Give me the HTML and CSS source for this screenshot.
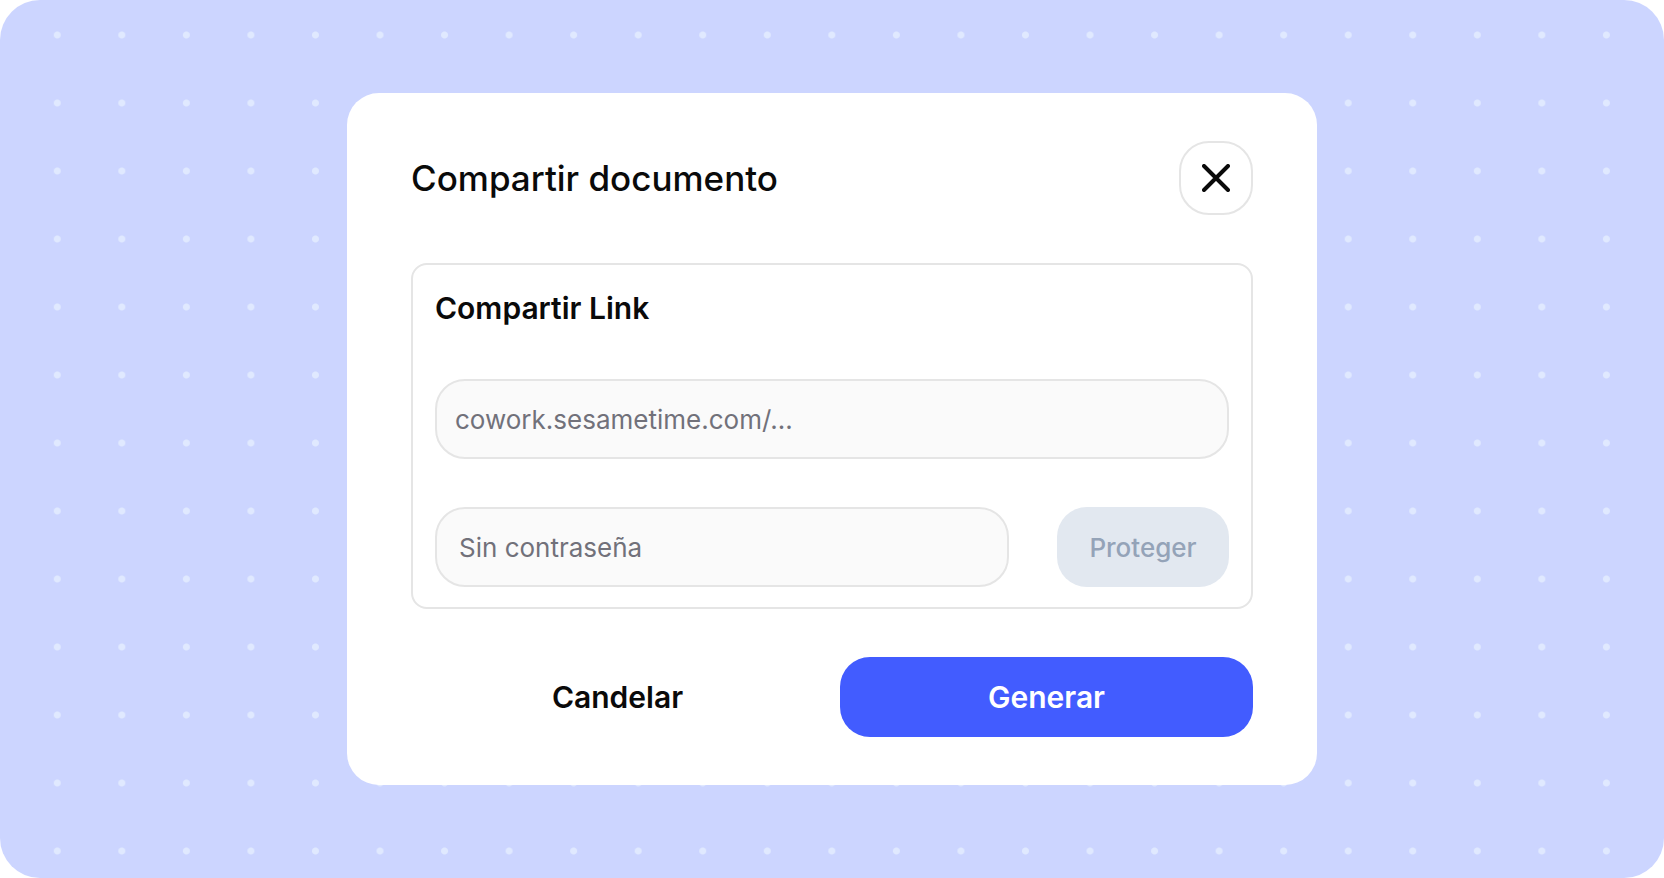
FILE: index.html
```html
<!DOCTYPE html>
<html lang="es">
<head>
  <meta charset="utf-8">
  <meta name="viewport" content="width=device-width, initial-scale=1">
  <title>Compartir documento</title>
  <link rel="stylesheet" href="styles.css">
</head>
<body>
  <main class="stage">
    <section class="dialog" role="dialog" aria-labelledby="dialog-title">
      <header class="dialog-header">
        <h1 class="dialog-title" id="dialog-title">Compartir documento</h1>
        <button class="close-button" type="button" aria-label="Cerrar">
          <svg class="close-icon" viewBox="0 0 28 28" aria-hidden="true">
            <path d="M2 2L26 26M26 2L2 26"/>
          </svg>
        </button>
      </header>
      <div class="panel">
        <h2 class="panel-title" id="link-title">Compartir Link</h2>
        <input class="field field-link" type="text" aria-labelledby="link-title" placeholder="cowork.sesametime.com/...">
        <div class="password-row">
          <input class="field field-password" type="text" aria-label="Contraseña" placeholder="Sin contraseña">
          <button class="button button-protect" type="button">Proteger</button>
        </div>
      </div>
      <footer class="dialog-footer">
        <button class="button button-plain" type="button">Candelar</button>
        <button class="button button-primary" type="button">Generar</button>
      </footer>
    </section>
  </main>
</body>
</html>
```
FILE: styles.css
```css
* {
  box-sizing: border-box;
}

body {
  margin: 0;
  background: #fff;
  color: #0a0a0a;
  font-family: Inter, "Liberation Sans", sans-serif;
}

h1,
h2 {
  margin: 0;
}

button,
input {
  font-family: inherit;
}

/* Dotted backdrop: 25 columns of dots inside the side padding */
.stage {
  display: flex;
  align-items: center;
  justify-content: center;
  min-height: 100vh;
  padding: 0 25px;
  border-radius: 40px;
  background:
    radial-gradient(circle, #e0e9ff 3px, transparent 4px) 0 1px / calc(100% / 25) 68px content-box,
    linear-gradient(#ccd5ff, #ccd5ff) border-box;
}

.dialog {
  display: flex;
  flex-direction: column;
  gap: 48px;
  width: 100%;
  max-width: 970px;
  padding: 48px 64px;
  border-radius: 32px;
  background: #fff;
}

.dialog-header {
  display: flex;
  align-items: center;
  justify-content: space-between;
}

.dialog-title {
  font-size: 35px;
  font-weight: 500;
  line-height: 46px;
}

.close-button {
  display: grid;
  place-items: center;
  width: 74px;
  height: 74px;
  padding: 0;
  border: 2px solid #e5e5e5;
  border-radius: 30px;
  background: #fff;
  color: #0a0a0a;
}

.close-icon {
  width: 28px;
  height: 28px;
  fill: none;
  stroke: currentColor;
  stroke-width: 4;
  stroke-linecap: round;
}

.panel {
  display: flex;
  flex-direction: column;
  gap: 48px;
  padding: 20px 22px;
  border: 2px solid #e5e5e5;
  border-radius: 16px;
}

.panel-title {
  font-size: 30px;
  font-weight: 600;
  line-height: 46px;
}

.field {
  width: 100%;
  min-width: 0;
  height: 80px;
  border: 2px solid #e5e5e5;
  border-radius: 30px;
  background: #fafafa;
  color: #0a0a0a;
  font-size: 26px;
}

.field::placeholder {
  color: #71717a;
  opacity: 1;
}

.field-link {
  padding: 0 18px;
}

.field-password {
  flex: 1;
  padding: 0 22px;
}

.password-row {
  display: flex;
  gap: 48px;
}

.button {
  height: 80px;
  padding: 0;
  border: 0;
  border-radius: 30px;
  font-size: 30px;
  font-weight: 600;
}

.button-protect {
  flex: 0 0 172px;
  background: #e2e8f0;
  color: #94a3b8;
  font-size: 26px;
  font-weight: 500;
}

.button-plain {
  background: #fff;
  color: #0a0a0a;
}

.button-primary {
  background: #425cff;
  color: #fff;
}

.dialog-footer {
  display: grid;
  grid-template-columns: 1fr 1fr;
  gap: 16px;
}
```
